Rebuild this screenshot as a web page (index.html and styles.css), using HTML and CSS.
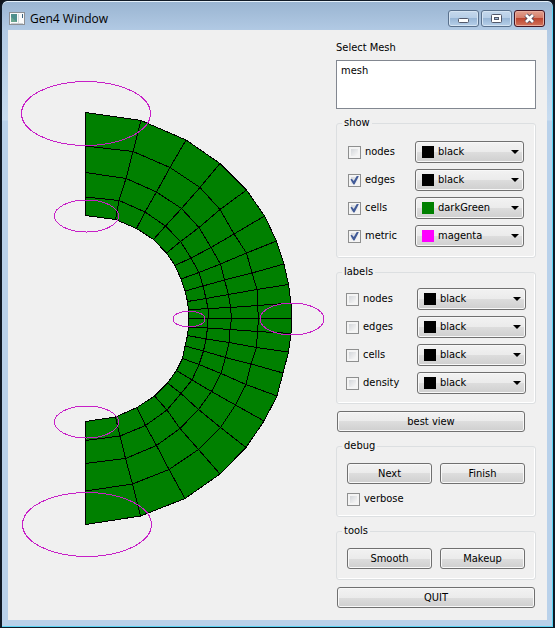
FILE: index.html
```html
<!DOCTYPE html>
<html lang="en">
<head>
<meta charset="utf-8">
<title>Gen4 Window</title>
<link rel="stylesheet" href="styles.css">
</head>
<body>
<div class="window">
  <header class="titlebar">
    <svg class="app-icon" width="16" height="14" viewBox="0 0 16 14" aria-hidden="true">
      <rect x="0.5" y="0.5" width="15" height="12" fill="#fafafa" stroke="#8c8f94"/>
      <rect x="2" y="2" width="6" height="8" fill="#4f8f8c"/>
      <path d="M2 10V5l6 5z" fill="#69a68f"/>
      <path d="M9.500 2v9" stroke="#d5dade"/>
      <path d="M13.500 2v4" stroke="#3d6380"/>
      <path d="M2 11.500h12" stroke="#c9ced2"/>
    </svg>
    <h1 class="title">Gen4 Window</h1>
    <div class="caption-buttons">
      <button class="caption" type="button" aria-label="Minimize">
        <svg width="13" height="11" viewBox="0 0 13 11"><rect x="1.500" y="5.500" width="10" height="4" rx="1" fill="#fff" stroke="#52586a"/></svg>
      </button>
      <button class="caption" type="button" aria-label="Maximize">
        <svg width="13" height="11" viewBox="0 0 13 11"><rect x="1.500" y="1.500" width="10" height="8" rx="1" fill="#fff" stroke="#52586a"/><rect x="4.500" y="4.500" width="4" height="2" fill="#9fb9d6" stroke="#52586a"/></svg>
      </button>
      <button class="caption close" type="button" aria-label="Close">
        <svg width="13" height="11" viewBox="0 0 13 11"><path d="M3 2l7 7M10 2l-7 7" stroke="#54495a" stroke-width="4.500"/><path d="M3 2l7 7M10 2l-7 7" stroke="#fff" stroke-width="2.600"/></svg>
      </button>
    </div>
  </header>
  <main class="client">
    <section class="canvas" aria-label="Mesh view">
      <svg class="mesh" viewBox="8 30 320 590" preserveAspectRatio="xMinYMin meet" shape-rendering="crispEdges">
        <path class="cells" d="M85.500 112.500L141 120.500 186 140 220 163.500 246.500 190 264.500 216 276.500 241 284 264 288.500 284.500 291 303 291.500 318.500 291 333.500 288.500 352 283 373 277 396 264 421 246 447.500 220 474 185 498.500 140.500 516 85.500 524.500V421.500L115.500 417 137 407.500 154.500 396 167.500 383 176.500 370.500 182.500 358.500 185 346 187.500 335.500 188.500 327V310L187.500 301.500 185 291 181 279 175 265.500 166.500 253 153.500 239.500 136.500 228.500 115.500 219.500 85.500 215.500z"/>
        <g class="edges">
          <path d="M85.500 146L133 151.500 170 167.500 200 187.500 220 209.500 234 234 246.500 253 252 273 257 289.500 257.500 305.500 258.500 318.500 257.500 331.500 256.500 347.500 251 364 246 384.500 235.500 405 220.500 427.500 198.500 449.500 169 469.500 132.500 484 85.500 491"/>
          <path d="M85.500 172.500L126 178.500 156.500 192 181.500 208.500 199 227.500 211 247.500 220.500 264 224.500 280 228.500 294.500 230.500 307.500 231.500 318.500 230 329.500 229 342.500 225.500 357.500 221 373.500 211.500 391.500 198.500 409.500 180 428.500 156.500 445.500 125.500 458.500 85.500 463.500"/>
          <path d="M85.500 197L119 200.500 145 212 165.500 226 180.500 241.500 191 258 199 272.500 203 286 206 298.500 208 308.500V318.500L207.500 328 206 339 203.500 351 199 364.500 192 380 181 393.500 167 410 145.500 425.500 120 436 85.500 440.500"/>
          <path d="M141 120.500L133 151.500 126 178.500 119 200.500 115.500 219.500M186 140L170 167.500 156.500 192 145 212 136.500 228.500M220 163.500L200 187.500 181.500 208.500 165.500 226 153.500 239.500M246.500 190L220 209.500 199 227.500 180.500 241.500 166.500 253M264.500 216L234 234 211 247.500 191 258 175 265.500M276.500 241L246.500 253 220.500 264 199 272.500 181 279M284 264L252 273 224.500 280 203 286 185 291M288.500 284.500L257 289.500 228.500 294.500 206 298.500 187.500 301.500M291 303L257.500 305.500 230.500 307.500 208 308.500 188.500 310M291.500 318.500H188.500"/>
          <path d="M291 333.500L257.500 331.500 230 329.500 207.500 328 188.500 327M288.500 352L256.500 347.500 229 342.500 206 339 187.500 335.500M283 373L251 364 225.500 357.500 203.500 351 185 346M277 396L246 384.500 221 373.500 199 364.500 182.500 358.500M264 421L235.500 405 211.500 391.500 192 380 176.500 370.500M246 447.500L220.500 427.500 198.500 409.500 181 393.500 167.500 383M220 474L198.500 449.500 180 428.500 167 410 154.500 396M185 498.500L169 469.500 156.500 445.500 145.500 425.500 137 407.500M140.500 516L132.500 484 125.500 458.500 120 436 115.500 417"/>
        </g>
        <g class="metric">
          <ellipse cx="86" cy="113.500" rx="64.500" ry="32"/>
          <ellipse cx="86.500" cy="216" rx="32" ry="16"/>
          <ellipse cx="189" cy="319" rx="16" ry="8"/>
          <ellipse cx="292" cy="319" rx="32" ry="16"/>
          <ellipse cx="86.500" cy="422" rx="32" ry="16"/>
          <ellipse cx="87" cy="524.500" rx="64.500" ry="32"/>
        </g>
      </svg>
    </section>
    <form class="panel">
      <div class="mesh-picker">
        <label for="mesh">Select Mesh</label>
        <select id="mesh" class="list" size="3"><option>mesh</option></select>
      </div>
      <fieldset class="group show">
        <legend>show</legend>
        <div class="row"><label class="check"><input type="checkbox">nodes</label><span class="combo black"><select aria-label="Show nodes colour"><option>black</option></select></span></div>
        <div class="row"><label class="check"><input type="checkbox" checked>edges</label><span class="combo black"><select aria-label="Show edges colour"><option>black</option></select></span></div>
        <div class="row"><label class="check"><input type="checkbox" checked>cells</label><span class="combo green"><select aria-label="Show cells colour"><option>darkGreen</option></select></span></div>
        <div class="row"><label class="check"><input type="checkbox" checked>metric</label><span class="combo magenta"><select aria-label="Show metric colour"><option>magenta</option></select></span></div>
      </fieldset>
      <fieldset class="group labels">
        <legend>labels</legend>
        <div class="row"><label class="check"><input type="checkbox">nodes</label><span class="combo black"><select aria-label="Label nodes colour"><option>black</option></select></span></div>
        <div class="row"><label class="check"><input type="checkbox">edges</label><span class="combo black"><select aria-label="Label edges colour"><option>black</option></select></span></div>
        <div class="row"><label class="check"><input type="checkbox">cells</label><span class="combo black"><select aria-label="Label cells colour"><option>black</option></select></span></div>
        <div class="row"><label class="check"><input type="checkbox">density</label><span class="combo black"><select aria-label="Label density colour"><option>black</option></select></span></div>
      </fieldset>
      <button class="push best" type="button">best view</button>
      <fieldset class="group actions">
        <legend>debug</legend>
        <div class="pair"><button class="push" type="button">Next</button><button class="push" type="button">Finish</button></div>
        <label class="check"><input type="checkbox">verbose</label>
      </fieldset>
      <fieldset class="group actions">
        <legend>tools</legend>
        <div class="pair"><button class="push" type="button">Smooth</button><button class="push" type="button">Makeup</button></div>
      </fieldset>
      <button class="push quit" type="button">QUIT</button>
    </form>
  </main>
</div>
</body>
</html>
```
FILE: styles.css
```css
* { box-sizing: border-box; }

body {
  margin: 0;
  background: #10151c;
  color: #000;
  font: 11px/14px "DejaVu Sans Condensed", "DejaVu Sans", sans-serif;
}

button, select, input { font: inherit; color: inherit; margin: 0; }

.window {
  display: flex;
  flex-direction: column;
  min-height: 100vh;
  padding: 0 6px 7px;
  border: 1px solid #101a26;
  border-left-width: 2px;
  border-right-width: 2px;
  border-radius: 7px 7px 0 0;
  background: linear-gradient(#99b4d1, #b2cae4 30px, #c8dcf0 119px, #b9d1ea 120px);
  box-shadow: inset 0 1px #e4f0fa, inset -1px -1px #5ad3f3;
}

.titlebar {
  display: flex;
  align-items: center;
  height: 29px;
  padding: 6px 2px 0 1px;
}

.app-icon { margin-right: 5px; }

.title {
  margin: 0;
  flex: 1;
  font: 12px/16px "Open Sans", sans-serif;
}

.caption-buttons { display: flex; gap: 2px; }

.caption {
  display: flex;
  align-items: center;
  justify-content: center;
  width: 31px;
  height: 17px;
  padding: 0;
  border: 1px solid #59708c;
  border-radius: 3px;
  background: linear-gradient(#c5d8ec, #b5cde6 50%, #98b6d6 50%, #b7d0e9);
  box-shadow: inset 0 0 0 1px #d5e4f3;
}

.close {
  border-color: #431422;
  background: linear-gradient(#e2a08f, #d37a66 50%, #bd4630 50%, #d2735c);
  box-shadow: inset 0 0 0 1px #e9ad9d;
}

.client {
  display: flex;
  flex: 1;
  background: #f0f0f0;
}

.canvas { flex: 1; min-width: 0; }

.mesh { display: block; width: 100%; max-width: 320px; }

.cells { fill: #008000; stroke: #000; }
.edges { fill: none; stroke: #000; }
.metric { fill: none; stroke: #c71fc7; }

.panel {
  display: flex;
  flex-direction: column;
  gap: 7px;
  width: 212px;
  padding: 11px 11px 10px 1px;
}

.mesh-picker { display: flex; flex-direction: column; gap: 5px; }

.list {
  appearance: none;
  width: 100%;
  height: 49px;
  padding: 3px;
  overflow: hidden;
  border: 1px solid #828790;
  border-radius: 0;
  background: #fff;
}

.list option { min-height: 14px; padding: 0 1px; }

.group {
  min-width: 0;
  margin: 0;
  border: 1px solid #dcdfe1;
  border-radius: 3px;
  box-shadow: inset -1px -1px #fff;
}

legend { margin: 0; padding: 0 2px; line-height: 14px; }

.show { padding: 11px 11px 10px; }
.labels { padding: 9px; }
.show legend { margin-left: -6px; }
.labels legend { margin-left: -4px; }
.actions { padding: 10px; }
.actions legend { margin-left: -5px; }

.row {
  display: flex;
  align-items: center;
  justify-content: space-between;
  height: 22px;
}

.row + .row { margin-top: 6px; }

.check { display: flex; align-items: center; gap: 4px; }

.check input {
  appearance: none;
  position: relative;
  width: 13px;
  height: 13px;
  border: 1px solid #8e8f8f;
  background: linear-gradient(135deg, #c9cdd2, #f4f4f4 75%);
  box-shadow: inset 0 0 0 2px #f4f4f4;
}

.check input:checked::after {
  content: "";
  position: absolute;
  inset: 1px;
  background: #425b98;
  clip-path: polygon(5% 45%, 20% 35%, 42% 62%, 78% 0, 98% 8%, 50% 100%, 38% 100%);
}

.combo { position: relative; width: 109px; }

.combo select {
  appearance: none;
  display: block;
  width: 100%;
  height: 22px;
  padding: 0 18px 0 22px;
}

.combo select, .push {
  border: 1px solid #707070;
  border-radius: 3px;
  background: linear-gradient(#f2f2f2, #ebebeb 50%, #dddddd 50%, #cfcfcf);
  box-shadow: inset 0 0 0 1px #f8f8f8;
}

.combo::before, .combo::after {
  content: "";
  position: absolute;
  pointer-events: none;
}

.combo::before { top: 5px; left: 7px; width: 12px; height: 12px; }
.black::before { background: #000; }
.green::before { background: #008000; }
.magenta::before { background: #ff00ff; }

.combo::after {
  top: 9px;
  right: 5px;
  border: 4px solid transparent;
  border-top-color: #000;
  border-bottom: 0;
}

.push { height: 21px; padding: 0; }
.best { margin: 0 11px 0 1px; }
.quit { margin: 0 1px; }

.pair { display: grid; grid-template-columns: 1fr 1fr; gap: 8px; }
.pair + .check { margin-top: 8px; }
```
